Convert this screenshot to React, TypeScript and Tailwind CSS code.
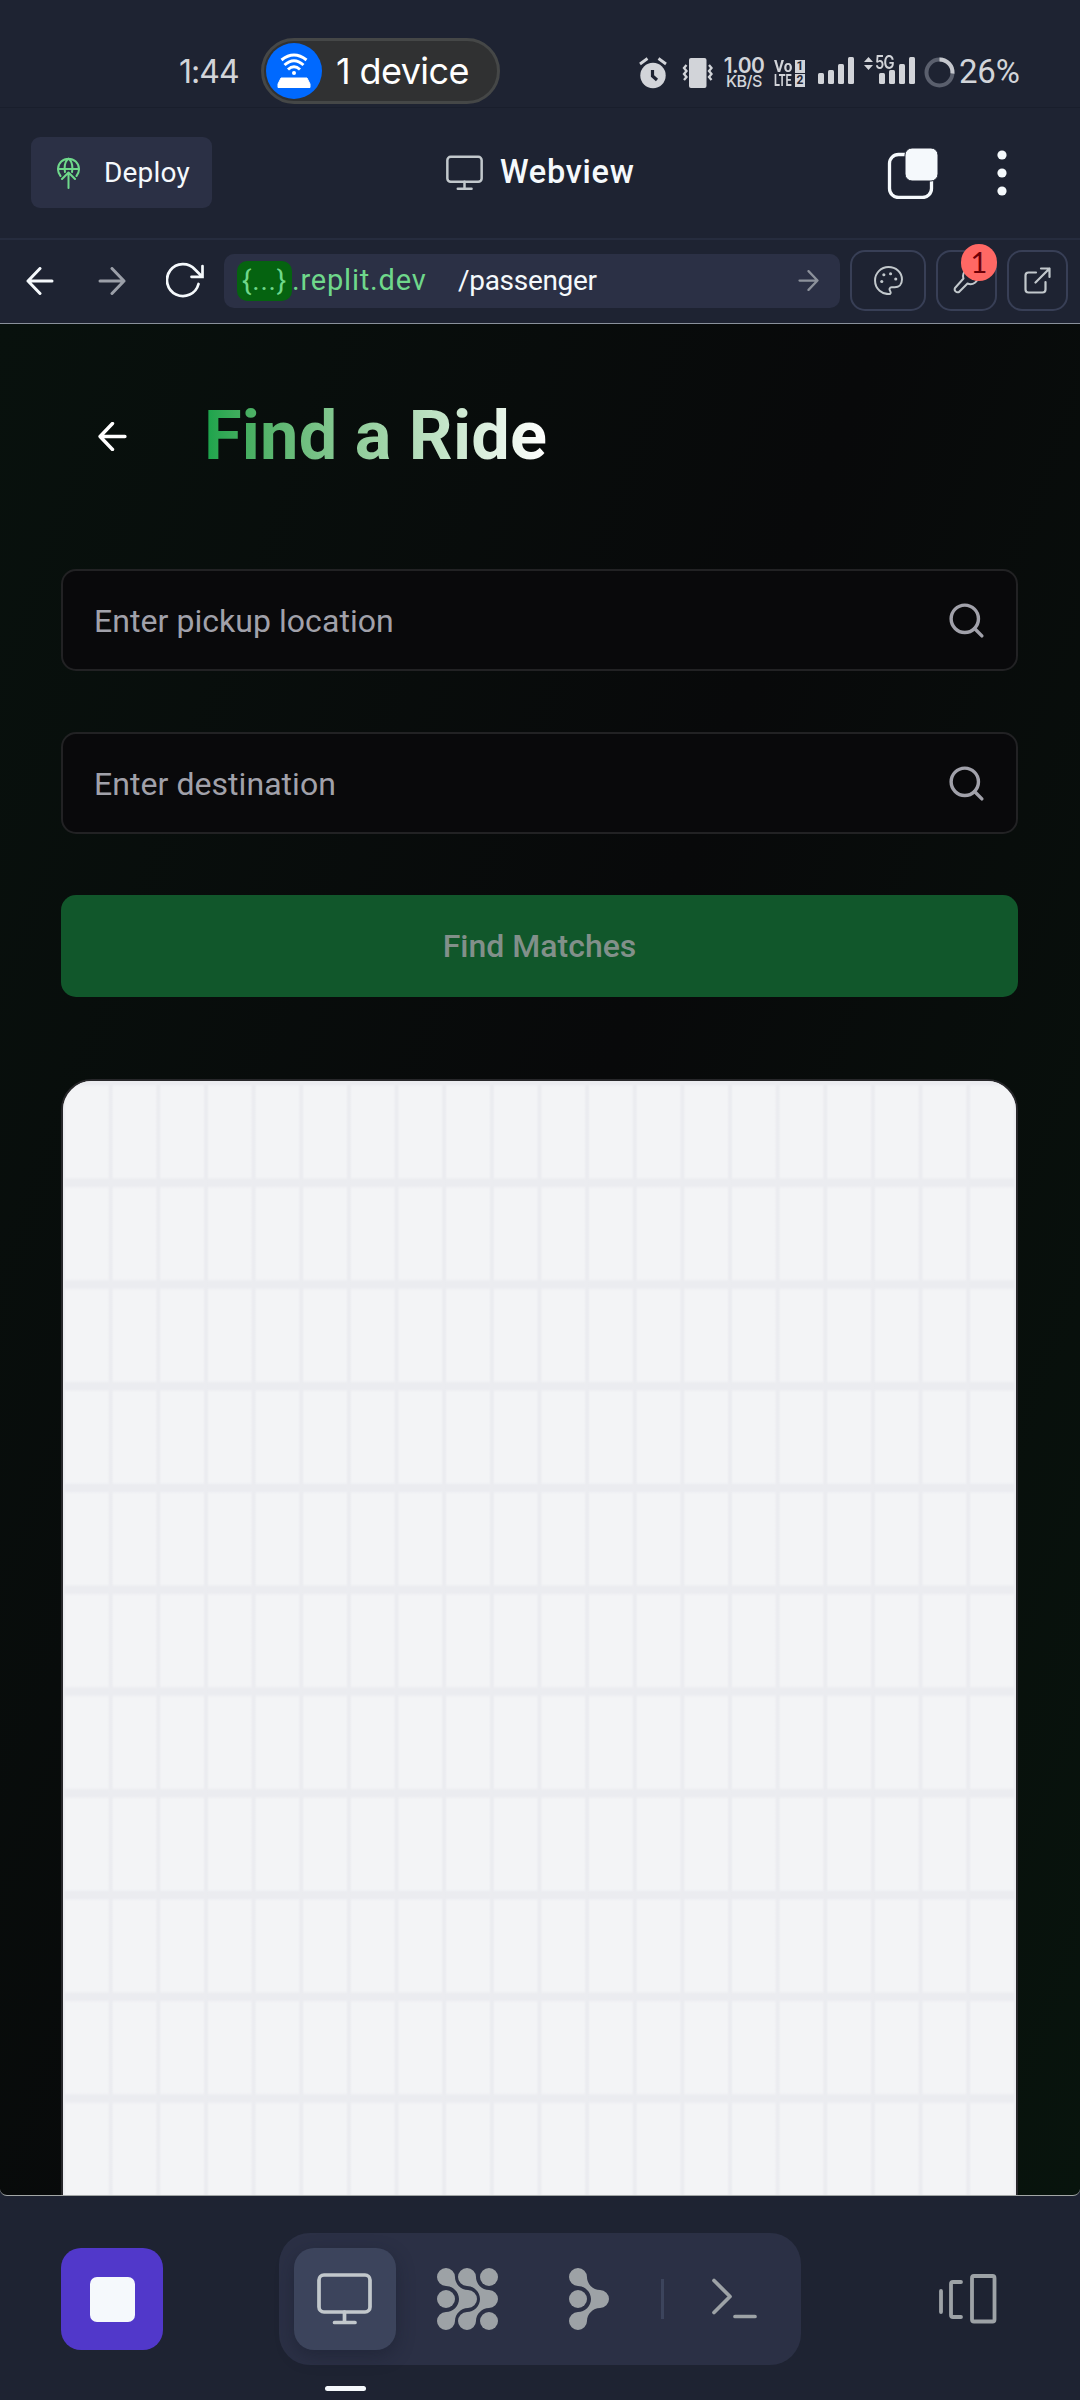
import React from "react";

function AlarmIcon() {
  return (
    <svg className="h-[32px] w-[28px]" viewBox="0 0 28 32" fill="none">
      <circle cx="14" cy="18.5" r="12.7" fill="#d2d4d9" />
      <path d="M1 7 L8.5 1.5 M27 7 L19.5 1.5" stroke="#d2d4d9" strokeWidth="2.8" />
      <path d="M13.5 13 V19 L18 23" stroke="#1e2332" strokeWidth="3.2" />
    </svg>
  );
}

function VibrateIcon() {
  return (
    <svg className="h-[30px] w-[31px]" viewBox="0 0 31 30" fill="none">
      <rect x="7" y="0" width="17.500" height="30" rx="2" fill="#d2d4d9" />
      <path d="M4.500 7 L2 10 L4.500 13 L2 16 L4.500 19 L2 22 M27 7 L29.500 10 L27 13 L29.500 16 L27 19 L29.500 22" stroke="#d2d4d9" strokeWidth="2.300" />
    </svg>
  );
}

function Bars({ heights }: { heights: number[] }) {
  return (
    <div className="flex items-end gap-[4px]">
      {heights.map((h, i) => (
        <div key={i} className="w-[6px] rounded-[1.5px] bg-[#d2d4d9]" style={{ height: h }} />
      ))}
    </div>
  );
}

function StatusBar() {
  return (
    <header className="relative flex h-[107px] items-start font-['Inter',sans-serif] text-[#d2d4d9]">
      <div className="ml-[179px] mt-[52px] w-[82px] text-[32px] leading-[40px] tracking-[-1px]">1:44</div>
      <div className="mt-[38px] flex h-[66px] w-[239px] items-center rounded-full border-[3px] border-[#454747] bg-[#303132] pl-[2px]">
        <svg className="h-[56px] w-[56px]" viewBox="0 0 56 56" fill="none">
          <circle cx="28" cy="28" r="28" fill="#0069ff" />
          <path d="M15.500 17 Q28 7 40.500 17 M18.500 22 Q28 13.500 37.500 22 M22 26.500 Q28 21 34 26.500" stroke="#fff" strokeWidth="3" />
          <circle cx="28" cy="30" r="2" fill="#fff" />
          <path d="M15 35 H41 L44 41 V44.500 H12 V41Z" fill="#fff" stroke="#fff" strokeLinejoin="round" />
        </svg>
        <span className="ml-[14px] whitespace-nowrap text-[36px] leading-[44px] tracking-[-0.6px] text-white">1 device</span>
      </div>
      <div className="ml-[139px] mt-[57px] flex items-start">
        <AlarmIcon />
        <div className="ml-[15px] mt-[1px]"><VibrateIcon /></div>
        <div className="ml-[10px] flex w-[42px] flex-col items-center">
          <span className="text-[21px] font-semibold leading-[17px] tracking-[-0.6px]">1.00</span>
          <span className="text-[16px] font-medium leading-[14px] tracking-[-0.5px]">KB/S</span>
        </div>
        <div className="ml-[9px] mt-[3px] grid grid-cols-[19px_10px] gap-x-[2px] gap-y-[1px] font-['Roboto',sans-serif] text-[17px] font-bold leading-[13px]">
          <span className="w-max origin-left scale-x-[0.9]">Vo</span>
          <span className="flex h-[13px] items-center justify-center bg-[#d2d4d9] text-[12px] text-[#1e2332]">1</span>
          <span className="w-max origin-left scale-x-[0.64]">LTE</span>
          <span className="flex h-[13px] items-center justify-center bg-[#d2d4d9] text-[12px] text-[#1e2332]">2</span>
        </div>
        <div className="ml-[13px]"><Bars heights={[11, 14, 20, 27]} /></div>
        <div className="relative ml-[25px]">
          <Bars heights={[11, 14, 20, 27]} />
          <span className="absolute -left-[4px] -top-[2px] origin-left scale-x-[0.82] text-[18px] font-semibold leading-[16px] tracking-[-1px]">5G</span>
          <svg className="absolute -left-[15px] top-0 h-[13px] w-[9px]" viewBox="0 0 9 13" fill="#d2d4d9">
            <path d="M4.500 0 L9 5 H0Z M4.500 13 L9 8 H0Z" />
          </svg>
        </div>
        <svg className="ml-[9px] h-[31px] w-[31px]" viewBox="0 0 31 31" fill="none">
          <circle cx="15.500" cy="15.500" r="13" stroke="#5a5f6d" strokeWidth="4" />
          <path d="M15.500 2.500 A13 13 0 0 1 28.500 16.500" stroke="#c5c7cd" strokeWidth="4" />
        </svg>
        <span className="-mt-[5px] ml-[4px] font-['Roboto',sans-serif] text-[33px] leading-[40px] tracking-[-0.2px]">26%</span>
      </div>
    </header>
  );
}

function Monitor({ className, stroke }: { className: string; stroke: string }) {
  return (
    <svg className={className} viewBox="0 0 55 52" fill="none" stroke={stroke} strokeWidth="3.700" strokeLinecap="round" strokeLinejoin="round">
      <rect x="2" y="2" width="51" height="37" rx="5" />
      <path d="M27.500 39 V49 M17.500 49.500 H38" />
    </svg>
  );
}

function TitleBar() {
  return (
    <div className="flex h-[133px] items-center border-b-2 border-t border-b-[#262c3e] border-t-[#191e2c] pb-px font-['Roboto',sans-serif]">
      <button className="ml-[31px] flex h-[71px] w-[181px] items-center rounded-[9px] bg-[#2b3045] pl-[26px]">
        <svg className="h-[32px] w-[23px]" viewBox="0 0 23 32" fill="none" stroke="#6fd88b" strokeWidth="2" strokeLinecap="round" strokeLinejoin="round">
          <path d="M3.500 19 A10.500 10.500 0 1 1 19.500 19 M1 12 H22 M8 15 C7 9 8.500 4 11.500 1.500 C14.500 4 16 9 15 15 M11.500 31 V16 M5 22 L11.500 15.500 L18 22" />
        </svg>
        <span className="ml-[24px] text-[28px] tracking-[0.2px] text-[#f5f9fc]">Deploy</span>
      </button>
      <Monitor className="ml-[234px] h-[36px] w-[37px]" stroke="#c2c8cc" />
      <span className="ml-[17px] w-[132px] whitespace-nowrap text-[32.5px] font-medium tracking-[0.7px] text-[#f5f9fc]">Webview</span>
      <svg className="ml-[255px] h-[52px] w-[52px]" viewBox="0 0 52 52" fill="none">
        <rect x="2.500" y="7.500" width="42" height="43" rx="9" stroke="#f5f9fc" strokeWidth="3.300" />
        <rect x="18" y="1" width="33" height="33" rx="7" fill="#f5f9fc" stroke="#1e2332" strokeWidth="1" />
      </svg>
      <svg className="ml-[58px] h-[48px] w-[10px]" viewBox="0 0 10 48" fill="#f5f9fc">
        <circle cx="5" cy="6" r="4.600" /><circle cx="5" cy="24" r="4.600" /><circle cx="5" cy="42" r="4.600" />
      </svg>
    </div>
  );
}

function Arrow({ className, flip = false, width = 3 }: { className: string; flip?: boolean; width?: number }) {
  return (
    <svg className={className} viewBox="0 0 28 28" fill="none" stroke="currentColor" strokeWidth={width} strokeLinecap="round" strokeLinejoin="round">
      {flip ? <path d="M2 14 H26 M14 1.500 L26 14 L14 26.500" /> : <path d="M26 14 H2 M14 1.500 L2 14 L14 26.500" />}
    </svg>
  );
}

function UrlBar() {
  return (
    <div className="flex h-[84px] items-center border-b border-[#8a919c] pb-[2px] font-['Roboto',sans-serif] text-[28px]">
      <Arrow className="ml-[26px] h-[28px] w-[28px] text-[#f5f9fc]" />
      <Arrow flip className="ml-[44px] h-[28px] w-[28px] text-[#9b9fa8]" />
      <svg className="ml-[40px] h-[37px] w-[38px]" viewBox="0 0 38 37" fill="none" stroke="#f5f9fc" strokeWidth="2.700" strokeLinecap="round">
        <path d="M32.500 22 A16 16 0 1 1 29 7.500 L36 14.500 M36.500 4 V14.800 H25.500" />
      </svg>
      <div className="ml-[20px] flex h-[54px] w-[616px] items-center whitespace-nowrap rounded-[10px] bg-[#2b3045] pl-[13px]">
        <span className="flex h-[40px] w-[55px] items-center justify-center rounded-[10px] bg-[#056310] tracking-[0.8px] text-[#6fd88b]">{"{...}"}</span>
        <span className="w-[166px] text-[29px] tracking-[0.8px] text-[#6fd88b]">.replit.dev</span>
        <span className="w-[340px] tracking-[-0.3px] text-[#f5f9fc]">/passenger</span>
        <Arrow flip className="h-[21px] w-[21px] text-[#8c919b]" />
      </div>
      <div className="ml-[10px] flex h-[61px] w-[76px] items-center justify-center rounded-[15px] border-2 border-[#383f56]">
        <svg className="h-[29px] w-[29px]" viewBox="0 0 28 28" fill="none" stroke="#c2c8cc" strokeWidth="1.900">
          <path d="M15.500 27 C8 28 1 22 1 14 C1 6.500 7 1 14 1 C21 1 27 6 27 13 C27 18 24 20.500 20 20.500 H17 C15 20.500 14.500 22.500 15.500 24 C16.300 25.500 16 26.700 15.500 27Z" />
          <g fill="#c2c8cc" stroke="none"><circle cx="7.500" cy="15" r="1.500" /><circle cx="9.500" cy="8.500" r="1.500" /><circle cx="16" cy="7.500" r="1.500" /><circle cx="21" cy="12.500" r="1.500" /></g>
        </svg>
      </div>
      <div className="relative ml-[10px] flex h-[61px] w-[61px] items-center justify-center rounded-[15px] border-2 border-[#383f56]">
        <svg className="h-[27px] w-[27px]" viewBox="0 0 27 27" fill="none" stroke="#c2c8cc" strokeWidth="2" strokeLinejoin="round">
          <path d="M18 1.500 A7.500 7.500 0 0 0 10.500 11.500 L2 21 A3 3 0 0 0 6 25 L14.500 16.500 A7.500 7.500 0 0 0 25 9 L20 12 L15 7Z" />
        </svg>
        <span className="absolute -right-[2px] -top-[8px] flex h-[37px] w-[36px] items-center justify-center rounded-full bg-[#ff6864] pb-[2px] font-['Lato',sans-serif] text-[29px] leading-none text-[#6d0008]">1</span>
      </div>
      <div className="ml-[10px] flex h-[61px] w-[61px] items-center justify-center rounded-[15px] border-2 border-[#383f56]">
        <svg className="h-[27px] w-[27px]" viewBox="0 0 27 27" fill="none" stroke="#c2c8cc" strokeWidth="2.200" strokeLinecap="round" strokeLinejoin="round">
          <path d="M12 5.500 H4.500 A3 3 0 0 0 1.500 8.500 V22.500 A3 3 0 0 0 4.500 25.500 H18.500 A3 3 0 0 0 21.500 22.500 V15 M11.500 15.500 L25.500 1.500 M17 1.500 H25.500 V10" />
        </svg>
      </div>
    </div>
  );
}

function Field({ label }: { label: string }) {
  return (
    <div className="flex h-[102px] items-center justify-between rounded-[15px] border-2 border-[#222224] bg-[#09090b] pl-[31px] pr-[29px]">
      <span className="pt-px text-[32px] tracking-[0.050px] text-[#a1a1aa]">{label}</span>
      <svg className="h-[41px] w-[41px]" viewBox="0 0 24 24" fill="none" stroke="#a1a1aa" strokeWidth="2" strokeLinecap="round">
        <circle cx="11" cy="11" r="8" /><path d="m21 21-4.300-4.300" />
      </svg>
    </div>
  );
}

function Passenger() {
  return (
    <main className="flex h-[1872px] flex-col overflow-hidden rounded-b-[7px] border-b border-[#a3a7a6] bg-[linear-gradient(110deg,#08110d_0%,#08090a_50%,#08140d_100%)] pl-[61px] pr-[62px] font-['Roboto',sans-serif]">
      <div className="mt-[61px] flex h-[102px] shrink-0 items-center">
        <Arrow className="ml-[37px] h-[29px] w-[29px] text-white" width={3.300} />
        <h1 className="ml-[77px] w-max bg-linear-to-r from-[#16a34a] to-white bg-clip-text text-[68.5px] font-bold leading-[92px] tracking-[0.2px] text-transparent">Find a Ride</h1>
      </div>
      <div className="mt-[82px] flex shrink-0 flex-col gap-[61px]">
        <Field label="Enter pickup location" />
        <Field label="Enter destination" />
        <button className="h-[102px] rounded-[15px] bg-[#11572b] text-[32px] font-medium text-[#82908a]">Find Matches</button>
      </div>
      <div className="mt-[82px] h-[1200px] shrink-0 overflow-hidden rounded-t-[31px] border-2 border-[#27272a] bg-[#f3f4f6]">
        <div className="h-full bg-[linear-gradient(90deg,#ebecf0_0,#ebecf0_1px,transparent_3px,transparent_44.650px,#ebecf0_46.650px,#ebecf0_47.650px),linear-gradient(180deg,#ebecf0_0,#ebecf0_3px,transparent_6px,transparent_95.750px,#ebecf0_98.750px,#ebecf0_101.750px)] bg-[size:47.650px_100%,100%_101.750px]" />
      </div>
    </main>
  );
}

function BottomBar() {
  return (
    <nav className="flex h-[204px] items-start">
      <button className="ml-[61px] mt-[52px] flex h-[102px] w-[102px] items-center justify-center rounded-[20px] bg-[#5138ca]">
        <span className="h-[45px] w-[45px] rounded-[7px] bg-[#f5f9fc]" />
      </button>
      <div className="relative ml-[116px] mt-[37px] flex h-[132px] w-[522px] items-center rounded-[31px] bg-[#2b3045] pl-[15px]">
        <div className="flex h-[102px] w-[102px] items-center justify-center rounded-[20px] bg-[#3c445c] pr-[2px] shadow-[0_6px_18px_rgba(20,24,40,0.4)]">
          <Monitor className="h-[52px] w-[55px]" stroke="#c2c8cc" />
        </div>
        <svg className="ml-[41px] h-[62px] w-[61px]" viewBox="0 0 61 62" fill="#9da2a6">
          <circle cx="9" cy="31" r="9" /><circle cx="52" cy="9" r="9" /><circle cx="52" cy="53" r="9" />
          <path d="M9 0 A9 9 0 0 1 18 9 C18 16 24 22 31 22 A9 9 0 0 1 31 40 C24 40 18 46 18 53 A9 9 0 1 1 9 44 C16 44 22 38 22 31 C22 24 16 18 9 18 A9 9 0 0 1 9 0Z" />
          <path d="M30 0 A9 9 0 0 1 39 9 C39 16 45 22 52 22 A9 9 0 0 1 52 40 C45 40 39 46 39 53 A9 9 0 1 1 30 44 C37 44 43 38 43 31 C43 24 37 18 30 18 A9 9 0 0 1 30 0Z" />
        </svg>
        <svg className="ml-[71px] h-[62px] w-[40px]" viewBox="0 0 40 62" fill="#9da2a6">
          <circle cx="9" cy="31" r="9" />
          <path d="M9 0 A9 9 0 0 1 18 9 C18 16 24 22 31 22 A9 9 0 0 1 31 40 C24 40 18 46 18 53 A9 9 0 1 1 9 44 C16 44 22 38 22 31 C22 24 16 18 9 18 A9 9 0 0 1 9 0Z" />
        </svg>
        <div className="ml-[52px] h-[40px] w-[3px] bg-[#3c445c]" />
        <svg className="ml-[48px] h-[42px] w-[46px]" viewBox="0 0 46 42" fill="none" stroke="#9da2a6" strokeWidth="3.700" strokeLinecap="round" strokeLinejoin="round">
          <path d="M2 2.500 L18 18.500 L2 34.500 M23 38.500 H43" />
        </svg>
        <div className="absolute left-[46px] top-[153px] h-[5px] w-[41px] rounded-full bg-[#f5f9fc]" />
      </div>
      <svg className="ml-[138px] mt-[78px] h-[50px] w-[58px]" viewBox="0 0 58 50" fill="none" stroke="#9da2a6" strokeWidth="3.800" strokeLinecap="round" strokeLinejoin="round">
        <path d="M2 17 V38 M22 8 H14 Q12 8 12 10 V41 Q12 43 14 43 H22" />
        <rect x="33" y="2" width="22.500" height="45.500" rx="2" />
      </svg>
    </nav>
  );
}

export default function App() {
  return (
    <div className="flex h-[2400px] w-[1080px] flex-col overflow-hidden bg-[#1e2332]">
      <StatusBar />
      <TitleBar />
      <UrlBar />
      <Passenger />
      <BottomBar />
    </div>
  );
}
